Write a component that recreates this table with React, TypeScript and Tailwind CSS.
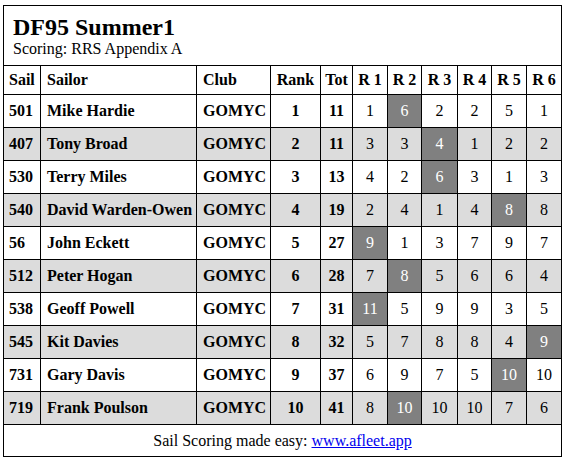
import React from "react";

type Row = { sail: string; name: string; rank: number; tot: number; r: number[]; d: number };

const rows: Row[] = [
  { sail: "501", name: "Mike Hardie", rank: 1, tot: 11, r: [1, 6, 2, 2, 5, 1], d: 1 },
  { sail: "407", name: "Tony Broad", rank: 2, tot: 11, r: [3, 3, 4, 1, 2, 2], d: 2 },
  { sail: "530", name: "Terry Miles", rank: 3, tot: 13, r: [4, 2, 6, 3, 1, 3], d: 2 },
  { sail: "540", name: "David Warden-Owen", rank: 4, tot: 19, r: [2, 4, 1, 4, 8, 8], d: 4 },
  { sail: "56", name: "John Eckett", rank: 5, tot: 27, r: [9, 1, 3, 7, 9, 7], d: 0 },
  { sail: "512", name: "Peter Hogan", rank: 6, tot: 28, r: [7, 8, 5, 6, 6, 4], d: 1 },
  { sail: "538", name: "Geoff Powell", rank: 7, tot: 31, r: [11, 5, 9, 9, 3, 5], d: 0 },
  { sail: "545", name: "Kit Davies", rank: 8, tot: 32, r: [5, 7, 8, 8, 4, 9], d: 5 },
  { sail: "731", name: "Gary Davis", rank: 9, tot: 37, r: [6, 9, 7, 5, 10, 10], d: 4 },
  { sail: "719", name: "Frank Poulson", rank: 10, tot: 41, r: [8, 10, 10, 10, 7, 6], d: 1 },
];

const cell = "border border-black font-['Liberation_Serif','Times_New_Roman',serif]";

export default function App() {
  return (
    <div className="bg-white w-[565px] h-[461px] pl-[3px] pt-[5px] text-black font-['Liberation_Serif','Times_New_Roman',serif]">
      <table className="border-collapse table-fixed w-[559px] text-[16px] leading-[18px] font-['Liberation_Serif','Times_New_Roman',serif]">
        <colgroup>
          <col className="w-[37px]" />
          <col className="w-[156px]" />
          <col className="w-[74px]" />
          <col className="w-[50px]" />
          <col className="w-[32px]" />
          <col className="w-[35px]" />
          <col className="w-[34px]" />
          <col className="w-[36px]" />
          <col className="w-[34px]" />
          <col className="w-[35px]" />
          <col className="w-[35px]" />
        </colgroup>
        <tbody>
          <tr className="h-[60px]">
            <td colSpan={11} className={`${cell} pl-[9px] align-top pt-[8px]`}>
              <div className="text-[24px] leading-[26px] font-bold">DF95 Summer1</div>
              <div className="text-[16px] leading-[18px]">Scoring: RRS Appendix A</div>
            </td>
          </tr>
          <tr className="h-[29px] font-bold">
            <td className={`${cell} pl-[5px]`}>Sail</td>
            <td className={`${cell} pl-[6px]`}>Sailor</td>
            <td className={`${cell} pl-[6px]`}>Club</td>
            <td className={`${cell} text-center`}>Rank</td>
            <td className={`${cell} text-center`}>Tot</td>
            <td className={`${cell} text-center`}>R 1</td>
            <td className={`${cell} text-center`}>R 2</td>
            <td className={`${cell} text-center`}>R 3</td>
            <td className={`${cell} text-center`}>R 4</td>
            <td className={`${cell} text-center`}>R 5</td>
            <td className={`${cell} text-center`}>R 6</td>
          </tr>
          {rows.map((row, i) => (
            <tr key={row.sail} className={`h-[33px] ${i % 2 === 1 ? "bg-[#dcdcdc]" : "bg-white"}`}>
              <td className={`${cell} pl-[5px] font-bold`}>{row.sail}</td>
              <td className={`${cell} pl-[6px] font-bold whitespace-nowrap`}>{row.name}</td>
              <td className={`${cell} pl-[6px] font-bold`}>GOMYC</td>
              <td className={`${cell} text-center font-bold`}>{row.rank}</td>
              <td className={`${cell} text-center font-bold`}>{row.tot}</td>
              {row.r.map((v, j) => (
                <td
                  key={j}
                  className={`${cell} text-center ${j === row.d ? "bg-[#808080] text-white" : ""}`}
                >
                  {v}
                </td>
              ))}
            </tr>
          ))}
          <tr className="h-[32px]">
            <td colSpan={11} className={`${cell} text-center`}>
              Sail Scoring made easy:{" "}
              <a href="#" className="text-[#0000ee] underline">
                www.afleet.app
              </a>
            </td>
          </tr>
        </tbody>
      </table>
    </div>
  );
}
